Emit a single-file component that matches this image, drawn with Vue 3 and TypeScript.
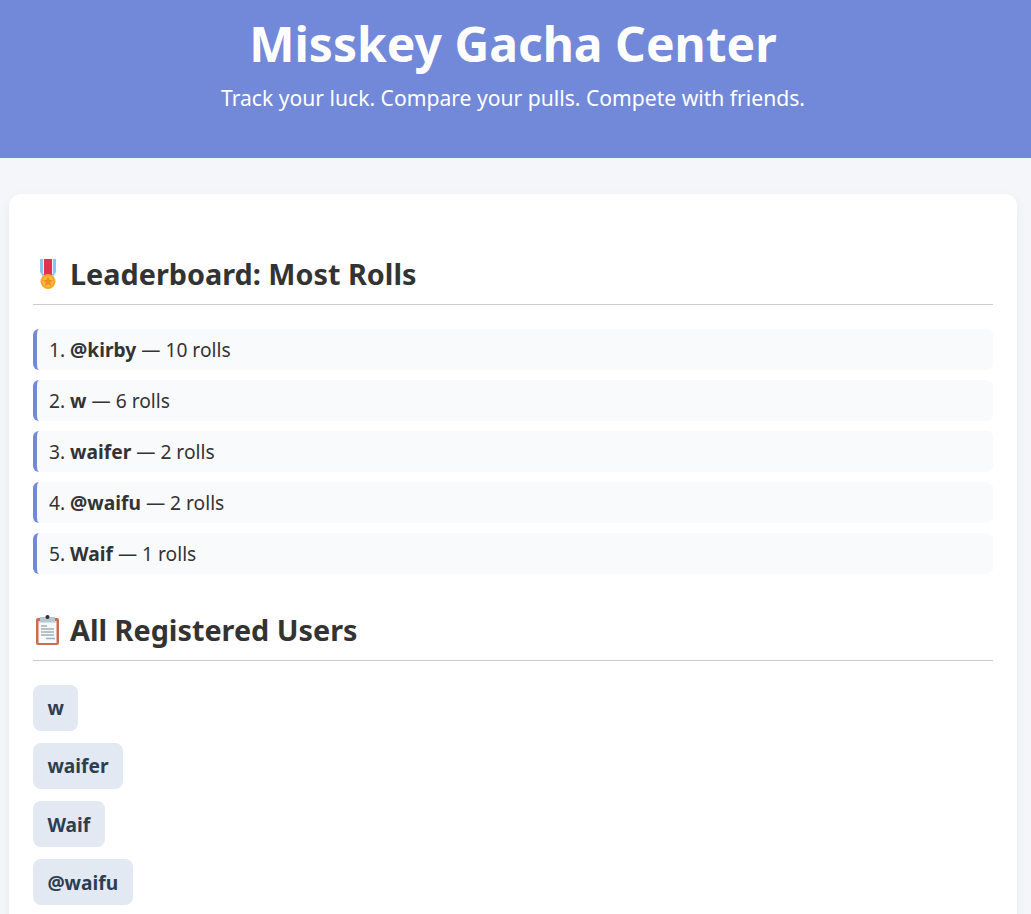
<template>
  <div class="page">
    <header class="hero">
      <h1>Misskey Gacha Center</h1>
      <p>Track your luck. Compare your pulls. Compete with friends.</p>
    </header>
    <main class="card">
      <h2>
        <svg class="icon" viewBox="0 0 30 32" width="30" height="32" aria-hidden="true">
          <path d="M7 1h16v13l-4 6h-8l-4-6z" fill="#8cc4f0" />
          <path d="M10 1h10v15h-10z" fill="#e9f3fb" />
          <path d="M11 1h8v17h-8z" fill="#e5304f" />
          <circle cx="15" cy="23.5" r="7.5" fill="#f9a72b" />
          <circle cx="15" cy="23.5" r="5.4" fill="#fbb94a" />
          <path d="M15 18.6l1.5 3.2 3.5.4-2.6 2.3.7 3.4-3.1-1.7-3.1 1.7.7-3.4-2.6-2.3 3.5-.4z" fill="#f08f1a" />
        </svg>
        <span>Leaderboard: Most Rolls</span>
      </h2>
      <ul class="board">
        <li v-for="(row, i) in leaders" :key="row.name">
          {{ i + 1 }}. <strong>{{ row.name }}</strong> — {{ row.rolls }} rolls
        </li>
      </ul>
      <h2>
        <svg class="icon" viewBox="0 0 30 32" width="30" height="32" aria-hidden="true">
          <rect x="3" y="4" width="23" height="27" rx="2" fill="#cc6b50" />
          <rect x="5.5" y="7" width="18" height="22" fill="#f7f8f9" />
          <path d="M7 3h15v3.5l1 2H6l1-2z" fill="#b8c8d2" />
          <circle cx="14.5" cy="3" r="2" fill="#27323a" />
          <path d="M8 12h6M8 15h13M8 18h13M8 21h13M13 24.5h9" stroke="#9fb0bb" stroke-width="1.6" fill="none" />
        </svg>
        <span>All Registered Users</span>
      </h2>
      <div class="users">
        <span v-for="user in users" :key="user" class="user">{{ user }}</span>
      </div>
    </main>
  </div>
</template>

<script setup lang="ts">
interface Leader {
  name: string
  rolls: number
}

const leaders: Leader[] = [
  { name: '@kirby', rolls: 10 },
  { name: 'w', rolls: 6 },
  { name: 'waifer', rolls: 2 },
  { name: '@waifu', rolls: 2 },
  { name: 'Waif', rolls: 1 }
]

const users = ['w', 'waifer', 'Waif', '@waifu']
</script>

<style>
html,
body {
  margin: 0;
  background: #f4f6f9;
}
</style>

<style scoped>
.page {
  font-family: "Noto Sans", sans-serif;
  color: #333;
  height: 914px;
  overflow: hidden;
}

.hero {
  background: #7289da;
  color: white;
  text-align: center;
  padding: 14px 21px 44px 16px;
}

.hero h1 {
  margin: 0 0 8px;
  font-size: 48px;
  line-height: 60px;
  font-weight: 700;
}

.hero p {
  margin: 0;
  font-size: 21.12px;
  line-height: 32px;
}

.card {
  margin: 36px 14px 0 9px;
  padding: 24px;
  background: white;
  border-radius: 12px;
  box-shadow: 0 4px 12px rgba(0, 0, 0, 0.05);
}

h2 {
  display: flex;
  align-items: center;
  gap: 7px;
  margin: 35px 0 24px;
  padding-bottom: 10px;
  border-bottom: 1px solid #ccc;
  font-size: 28.8px;
  line-height: 41px;
  font-weight: 700;
}

.icon {
  flex: none;
}

.board {
  list-style: none;
  margin: 0;
  padding: 0;
}

.board li {
  margin-bottom: 10px;
  padding: 6px 12px;
  font-size: 19.2px;
  line-height: 29px;
  background: #f9fafc;
  border-left: 4px solid #7289da;
  border-radius: 6px;
}

.users {
  display: flex;
  flex-direction: column;
  align-items: flex-start;
  gap: 12.2px;
  margin-top: -0.2px;
}

.user {
  padding: 8.4px 14.4px 7.6px;
  font-size: 19.2px;
  line-height: 30px;
  font-weight: 700;
  color: #2c3e50;
  background: #e3e9f3;
  border-radius: 8px;
}
</style>
